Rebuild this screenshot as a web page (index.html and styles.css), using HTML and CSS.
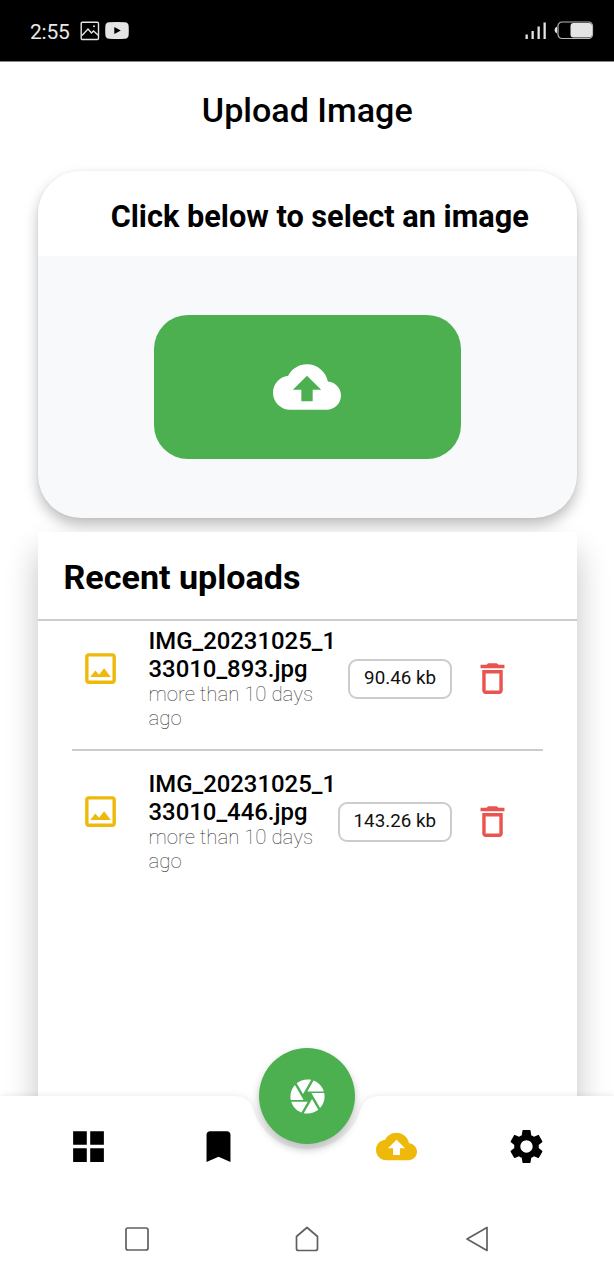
FILE: index.html
```html
<!DOCTYPE html>
<html lang="en">
<head>
<meta charset="utf-8">
<title>Upload Image</title>
<link rel="stylesheet" href="styles.css">
</head>
<body>
<svg class="defs" aria-hidden="true">
  <symbol id="cloud" viewBox="0 0 24 24"><path d="M19.35 10.04C18.67 6.59 15.64 4 12 4 9.11 4 6.6 5.64 5.35 8.04 2.34 8.36 0 10.91 0 14c0 3.31 2.69 6 6 6h13c2.76 0 5-2.24 5-5 0-2.64-2.05-4.78-4.65-4.96zM14 13v4h-4v-4H7l5-5 5 5h-3z"/></symbol>
  <symbol id="image" viewBox="0 0 24 24"><path d="M19 5v14H5V5h14m0-2H5c-1.1 0-2 .9-2 2v14c0 1.1.9 2 2 2h14c1.1 0 2-.9 2-2V5c0-1.1-.9-2-2-2zm-4.86 8.86l-3 3.87L9 13.14 6 17h12l-3.86-5.14z"/></symbol>
  <symbol id="trash" viewBox="0 0 24 24"><path d="M6 19c0 1.100.9 2 2 2h8c1.100 0 2-.9 2-2V7H6v12zM8 9h8v10H8V9zm7.500-5l-1-1h-5l-1 1H5v2h14V4z"/></symbol>
</svg>
<div class="screen">
  <header class="status">
    <span class="clock">2:55</span>
    <svg class="st-image" viewBox="0 0 20 20"><rect x="1.200" y="1.200" width="17.300" height="17.300" rx="1.200"/><path d="M2 14.500 8 8l3.500 4 2-2 5 4.500"/><circle cx="14" cy="5.200" r="1"/></svg>
    <svg class="st-video" viewBox="0 0 24 17"><path fill-rule="evenodd" d="M4 .3Q12-.3 20 .3 23.200.5 23.600 3.500 24 8.500 23.600 13.500 23.200 16.500 20 16.700 12 17.300 4 16.700.8 16.500.4 13.500 0 8.500.4 3.500.8.5 4 .3ZM9.300 5v7l6.500-3.500Z"/></svg>
    <svg class="st-signal" viewBox="0 0 22 17"><path d="M.5 12.500h2.300V17H.5zM6.500 9h2.300v8H6.500zM12.500 4.500h2.300V17h-2.300zM18.500.500h2.300V17h-2.300z"/></svg>
    <svg class="st-battery" viewBox="0 0 40 19"><path class="fill" d="M3 5.500v7Q.5 11.500.5 9T3 5.500Z"/><rect class="line" x="4" y="1" width="34.500" height="16.500" rx="4"/><rect class="fill" x="16.500" y="2" width="21.500" height="14.500" rx="3"/></svg>
  </header>

  <main class="content">
    <h1 class="title">Upload Image</h1>
    <section class="picker">
      <h2 class="picker-title">Click below to select an image</h2>
      <div class="picker-body">
        <button class="upload"><svg class="upload-icon"><use href="#cloud"/></svg></button>
      </div>
    </section>
    <section class="recent">
      <h2 class="recent-title">Recent uploads</h2>
      <ul class="list">
        <li class="row">
          <svg class="icon thumb"><use href="#image"/></svg>
          <div class="info">
            <div class="name">IMG_20231025_1<br>33010_893.jpg</div>
            <div class="age">more than 10 days<br>ago</div>
          </div>
          <span class="size">90.46 kb</span>
          <svg class="icon trash"><use href="#trash"/></svg>
        </li>
        <li class="row">
          <svg class="icon thumb"><use href="#image"/></svg>
          <div class="info">
            <div class="name">IMG_20231025_1<br>33010_446.jpg</div>
            <div class="age">more than 10 days<br>ago</div>
          </div>
          <span class="size">143.26 kb</span>
          <svg class="icon trash"><use href="#trash"/></svg>
        </li>
      </ul>
    </section>
  </main>

  <nav class="tabs">
    <svg class="tabs-shape" viewBox="0 0 614 102"><path d="M0 0H234Q248 0 253 12A56 56 0 0 0 361 12Q366 0 380 0H614V102H0Z"/></svg>
    <svg class="icon tab" viewBox="0 0 24 24"><path d="M3 3h8v8H3zM13 3h8v8h-8zM3 13h8v8H3zM13 13h8v8h-8z"/></svg>
    <svg class="icon tab" viewBox="0 0 24 24"><path d="M17 3H7c-1.100 0-1.990.9-1.990 2L5 21l7-3 7 3V5c0-1.100-.9-2-2-2z"/></svg>
    <span class="tab-gap"></span>
    <svg class="icon tab active"><use href="#cloud"/></svg>
    <svg class="icon tab" viewBox="0 0 24 24"><path d="M19.140 12.940c.04-.3.06-.61.06-.94 0-.32-.02-.64-.07-.94l2.030-1.580c.18-.14.23-.41.12-.61l-1.920-3.320c-.12-.22-.37-.29-.59-.22l-2.390.96c-.5-.38-1.030-.7-1.620-.94l-.36-2.540c-.04-.24-.24-.41-.48-.41h-3.840c-.24 0-.43.17-.47.41l-.36 2.540c-.59.24-1.130.57-1.620.94l-2.390-.96c-.22-.08-.47 0-.59.22L2.740 8.870c-.12.21-.08.47.12.61l2.030 1.580c-.05.3-.09.63-.09.94s.02.64.07.94l-2.030 1.580c-.18.14-.23.41-.12.61l1.920 3.320c.12.22.37.29.59.22l2.390-.96c.5.38 1.030.7 1.620.94l.36 2.540c.05.24.24.41.48.41h3.840c.24 0 .44-.17.47-.41l.36-2.540c.59-.24 1.130-.56 1.620-.94l2.390.96c.22.08.47 0 .59-.22l1.920-3.320c.12-.22.07-.47-.12-.61l-2.010-1.580zM12 15.600c-1.980 0-3.600-1.620-3.600-3.600s1.620-3.600 3.600-3.600 3.600 1.620 3.600 3.600-1.620 3.600-3.600 3.600z"/></svg>
    <button class="fab"><svg class="icon" viewBox="0 0 24 24"><path d="M9.400 10.500l4.770-8.260C13.470 2.090 12.750 2 12 2c-2.400 0-4.600.85-6.320 2.250l3.660 6.350.06-.1zM21.540 9c-.92-2.920-3.150-5.260-6-6.340L11.880 9h9.660zm.26 1h-7.490l.29.5 4.760 8.250C21 16.970 22 14.610 22 12c0-.69-.07-1.350-.2-2zM8.540 12l-3.900-6.750C3.010 7.030 2 9.390 2 12c0 .69.07 1.350.2 2h7.490l-1.150-2zm-6.080 3c.92 2.920 3.150 5.260 6 6.340L12.120 15H2.460zm11.270 0l-3.900 6.760c.7.15 1.420.24 2.170.24 2.400 0 4.600-.85 6.320-2.250l-3.660-6.350-.93 1.600z"/></svg></button>
  </nav>

  <footer class="system">
    <svg class="sys" viewBox="0 0 28 28"><rect x="3" y="3" width="22" height="22" rx="2"/></svg>
    <svg class="sys" viewBox="0 0 28 28"><path d="M14 2.500 24.500 11.500V23.500Q24.500 25.500 22.500 25.500H5.500Q3.500 25.500 3.500 23.500V11.500Z"/></svg>
    <svg class="sys" viewBox="0 0 28 28"><path d="M24 2.500V25.500L4 14Z"/></svg>
  </footer>
</div>
</body>
</html>
```
FILE: styles.css
```css
* { box-sizing: border-box; }
body { margin: 0; background: #fff; color: #000; font-family: Roboto, "Liberation Sans", sans-serif; }
h1, h2, ul { margin: 0; padding: 0; }
button { border: 0; padding: 0; }
.defs { display: none; }
.screen { width: 614px; height: 1280px; display: flex; flex-direction: column; overflow: hidden; }

.status { height: 62px; flex: none; background: #000; border-bottom: 1px solid #888; color: #e8e8e8; display: flex; align-items: center; padding: 0 20px 0 30px; }
.clock { font-size: 21px; line-height: 24px; width: 50px; letter-spacing: -0.2px; padding-top: 2px; }
.st-image { width: 20px; height: 20px; fill: none; stroke: #e4e4e4; stroke-width: 1.4; }
.st-image circle { fill: #e4e4e4; stroke: none; }
.st-video { width: 24px; height: 17px; margin-left: 5px; fill: #e4e4e4; }
.st-signal { width: 22px; height: 17px; margin-left: auto; fill: #e4e4e4; }
.st-battery { width: 40px; height: 19px; margin-left: 7px; }
.st-battery .fill { fill: #e4e4e4; }
.st-battery .line { fill: none; stroke: #b8b8b8; stroke-width: 1.2; }

.content { flex: 1; min-height: 0; overflow: hidden; display: flex; flex-direction: column; padding: 0 37px 0 37.5px; }
.title { height: 109px; flex: none; padding-top: 28px; font-size: 34.1px; line-height: 40px; font-weight: 500; text-align: center; }

.picker { height: 347px; flex: none; border-radius: 43px; overflow: hidden; background: #f7f9fb; box-shadow: 0 7px 14px rgba(0, 0, 0, 0.26), 0 0 3px rgba(0, 0, 0, 0.06); }
.picker-title { height: 85px; background: #fff; padding: 26px 0 0 25px; font-size: 30.7px; line-height: 40px; font-weight: 700; text-align: center; white-space: nowrap; }
.picker-body { height: 262px; display: flex; align-items: center; justify-content: center; }
.upload { width: 307px; height: 144px; border-radius: 34px; background: #4caf50; display: flex; align-items: center; justify-content: center; }
.upload-icon { width: 68px; height: 68px; fill: #fff; }

.recent { height: 700px; flex: none; margin-top: 14px; background: #fff; box-shadow: 0 20px 30px rgba(0, 0, 0, 0.24); }
.recent-title { height: 89px; border-bottom: 2px solid #ccc; padding: 25px 0 0 26px; font-size: 34.1px; line-height: 40px; font-weight: 700; }
.list { list-style: none; padding: 0 34px; }
.row { height: 130px; display: grid; grid-template-columns: 69px 1fr auto 41px; padding: 7px 30px 0 8px; border-bottom: 2px solid #ccc; }
.row + .row { height: 144px; border: 0; padding-top: 20px; }
.icon { width: 41px; height: 41px; display: block; }
.thumb { fill: #efb90b; margin: 20px 0 0 0; }
.name { font-size: 23.9px; line-height: 27.500px; font-weight: 500; white-space: nowrap; }
.age { margin-top: -1.5px; font-size: 20.4px; line-height: 24px; font-weight: 100; color: #333; white-space: nowrap; }
.info { min-width: 0; }
.size { height: 40px; margin: 31px 20px 0 0; border: 2px solid #ccc; border-radius: 9px; padding: 0 14px; font-size: 18.8px; line-height: 35px; color: #111; white-space: nowrap; align-self: start; }
.trash { fill: #e9544f; margin-top: 30px; }

.tabs { position: relative; height: 102px; flex: none; display: grid; grid-template-columns: 130px 130px 48px 130px 130px; justify-content: center; justify-items: center; align-items: center; padding-bottom: 1px; }
.tabs-shape { position: absolute; inset: 0; width: 614px; height: 102px; overflow: visible; fill: #fff; filter: drop-shadow(0 0 3px rgba(0, 0, 0, 0.1)); }
.tab { position: relative; }
.tab.active { fill: #efb90b; }
.fab { position: absolute; left: 259px; top: -48px; width: 96px; height: 96px; border-radius: 50%; background: #4caf50; fill: #fff; display: grid; place-items: center; box-shadow: 0 5px 9px rgba(0, 0, 0, 0.26); }

.system { position: relative; height: 82px; flex: none; background: #fff; display: grid; grid-template-columns: 170px 170px 170px; justify-content: center; justify-items: center; align-items: center; }
.sys { width: 28px; height: 28px; fill: none; stroke: #606060; stroke-width: 1.7; stroke-linejoin: round; }
```
